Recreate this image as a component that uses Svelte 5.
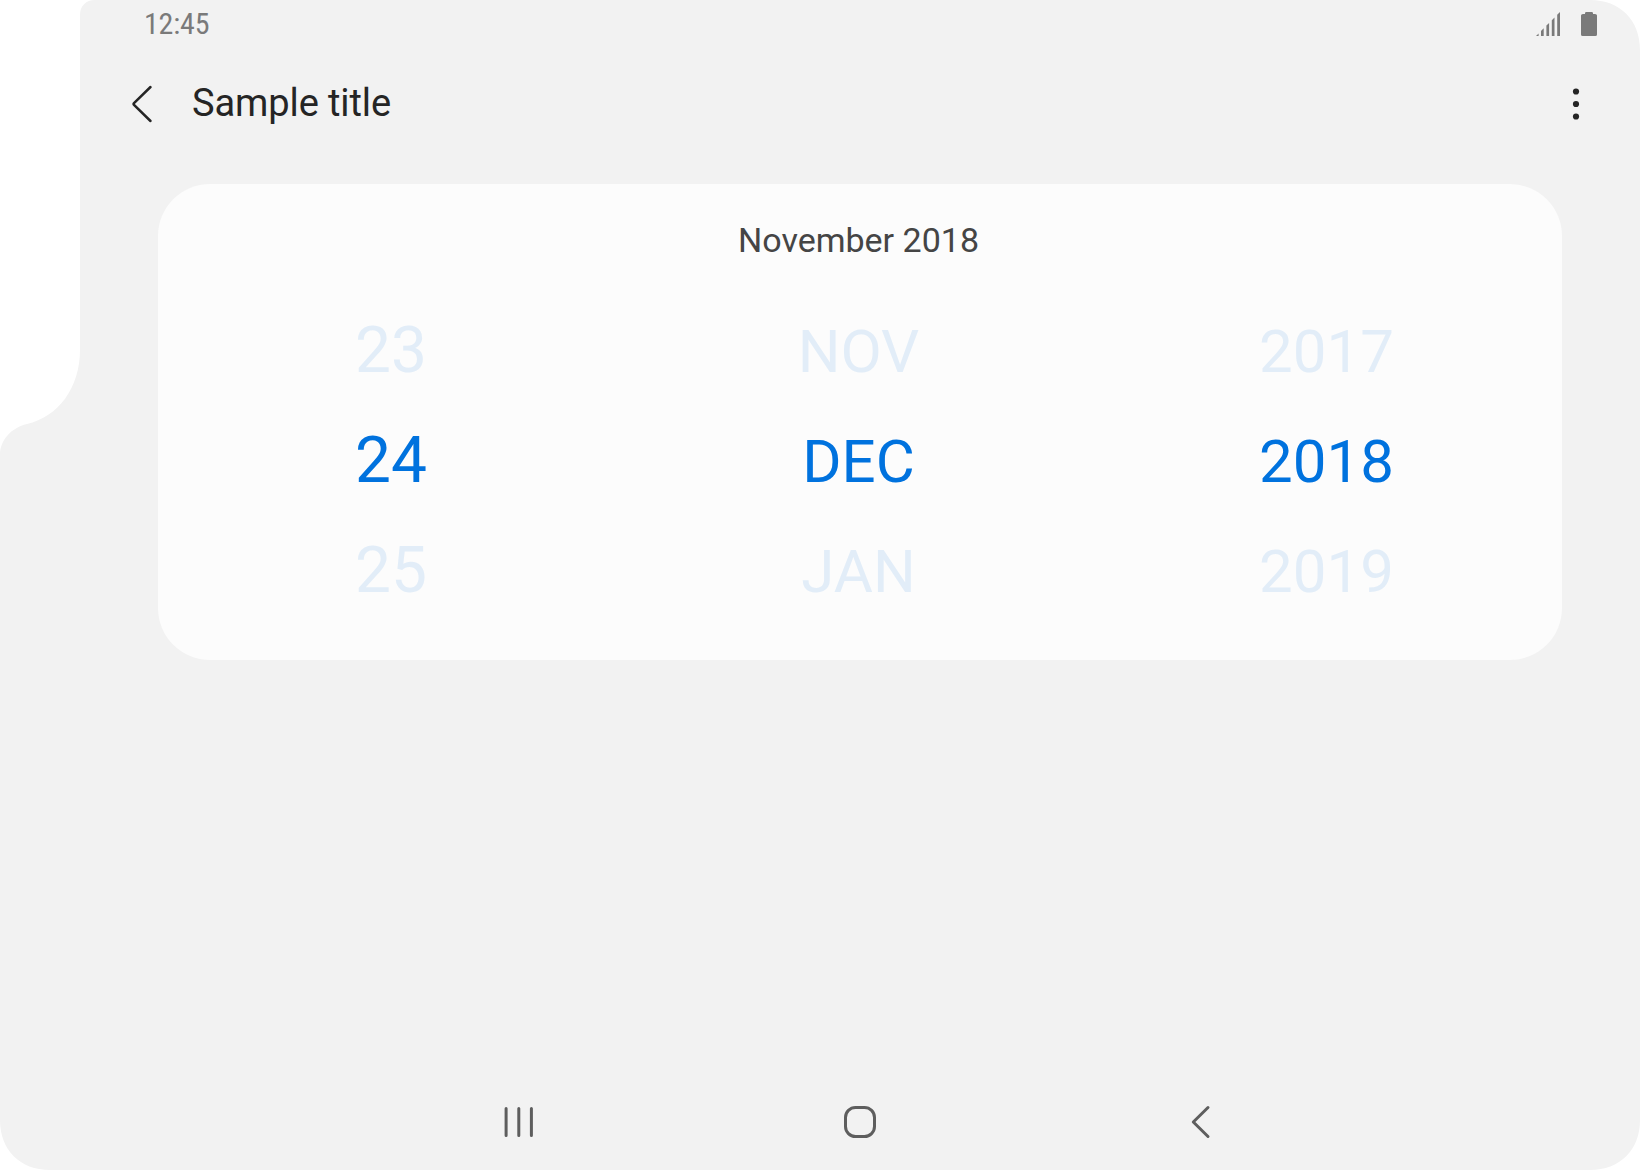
<script>
  const columns = [
    { name: 'day', values: ['23', '24', '25'] },
    { name: 'month', values: ['NOV', 'DEC', 'JAN'] },
    { name: 'year', values: ['2017', '2018', '2019'] }
  ];
</script>

<div class="device">
  <svg class="screen" viewBox="0 0 1640 1170" aria-hidden="true">
    <path d="M95 0H1590C1620 0 1640 20 1640 50V1120C1640 1150 1620 1170 1590 1170H50C20 1170 0 1150 0 1120V455C0 440 11 428 27 424C58 417 80 388 80 350V15C80 6 86 0 95 0Z" />
  </svg>

  <header class="status">
    <span class="time">12:45</span>
    <div class="indicators">
      <svg width="24" height="24" viewBox="0 0 24 24">
        <path d="M0 24L2.6 21.4V24ZM5 24V19L7.7 16.3V24ZM10.4 24V13.6L13.1 10.9V24ZM15.8 24V8.2L18.5 5.5V24ZM21.2 24V2.8L24 0V24Z" />
      </svg>
      <svg width="16" height="24" viewBox="0 0 16 24">
        <path d="M5.3 0H10.7Q12 0 12 1.3V2H14Q16 2 16 3.6V22.4Q16 24 14.4 24H1.6Q0 24 0 22.4V3.6Q0 2 2 2H4V1.3Q4 0 5.3 0Z" />
      </svg>
    </div>
  </header>

  <div class="appbar">
    <svg class="back" width="22" height="38" viewBox="0 0 22 38">
      <path d="M19.5 2L3 18.1Q2.1 19 3 19.9L19.5 36" />
    </svg>
    <h1>Sample title</h1>
    <svg class="more" width="8" height="32" viewBox="0 0 8 32">
      <circle cx="4" cy="3.5" r="3.1" />
      <circle cx="4" cy="16" r="3.1" />
      <circle cx="4" cy="28.5" r="3.1" />
    </svg>
  </div>

  <main class="card">
    <h2>November 2018</h2>
    <div class="picker">
      {#each columns as column}
        <div class="column {column.name}">
          {#each column.values as value, i}
            <span class:selected={i === 1}>{value}</span>
          {/each}
        </div>
      {/each}
    </div>
  </main>

  <nav>
    <svg width="34" height="34" viewBox="0 0 34 34">
      <path d="M4.1 3.5V30.5M16.8 3.5V30.5M29.4 3.5V30.5" />
    </svg>
    <svg width="34" height="34" viewBox="0 0 34 34">
      <rect x="2.5" y="2.5" width="29" height="29" rx="10" />
    </svg>
    <svg width="34" height="34" viewBox="0 0 34 34">
      <path d="M24 2.5L9.3 17L24 31.5" />
    </svg>
  </nav>
</div>

<style>
  :global(body) {
    margin: 0;
    background: #fff;
    overflow: hidden;
  }
  .device {
    position: relative;
    width: 1640px;
    height: 1170px;
    display: flex;
    flex-direction: column;
    font-family: Roboto, 'Liberation Sans', sans-serif;
    font-weight: 400;
  }
  .screen {
    position: absolute;
    inset: 0;
    z-index: -1;
    fill: #f2f2f2;
  }
  svg {
    display: block;
    flex: none;
  }
  .status {
    display: flex;
    align-items: center;
    justify-content: space-between;
    height: 48px;
    padding: 0 43px 0 144px;
    color: #7a7a7a;
  }
  .time {
    font-family: 'Roboto Condensed', Roboto, sans-serif;
    font-stretch: 75%;
    font-size: 30px;
    line-height: 48px;
    letter-spacing: -0.2px;
  }
  .indicators {
    display: flex;
    gap: 21px;
    fill: #7a7a7a;
  }
  .appbar {
    display: flex;
    align-items: center;
    height: 112px;
    padding: 0 60px 0 131px;
    color: #252525;
  }
  .back {
    fill: none;
    stroke: #252525;
    stroke-width: 2.5;
    stroke-linecap: round;
  }
  h1 {
    flex: 1;
    margin: 0 0 2px 39px;
    font-size: 38px;
    font-weight: 400;
    line-height: 44px;
    letter-spacing: -0.1px;
  }
  .more {
    fill: #252525;
  }
  .card {
    box-sizing: border-box;
    width: 1404px;
    height: 476px;
    margin: 24px 0 0 158px;
    padding: 36px 3px 0 0;
    border-radius: 52px;
    background: #fcfcfc;
  }
  h2 {
    margin: 0;
    color: #454545;
    font-size: 34px;
    font-weight: 400;
    line-height: 40px;
    text-align: center;
  }
  .picker {
    display: grid;
    grid-template-columns: repeat(3, 1fr);
    margin-top: 36px;
  }
  .column {
    display: flex;
    flex-direction: column;
    align-items: center;
    padding-top: 1px;
    font-size: 60px;
    line-height: 110px;
    color: #e2edf8;
  }
  .day {
    padding-top: 0;
    padding-right: 1px;
    font-size: 64px;
  }
  .year {
    padding-left: 2px;
  }
  .selected {
    color: #0072de;
  }
  nav {
    display: flex;
    justify-content: center;
    gap: 307px;
    margin-top: 445px;
    padding-left: 80px;
    fill: none;
    stroke: #5e5e5e;
    stroke-width: 3;
    stroke-linecap: round;
    stroke-linejoin: round;
  }
</style>
